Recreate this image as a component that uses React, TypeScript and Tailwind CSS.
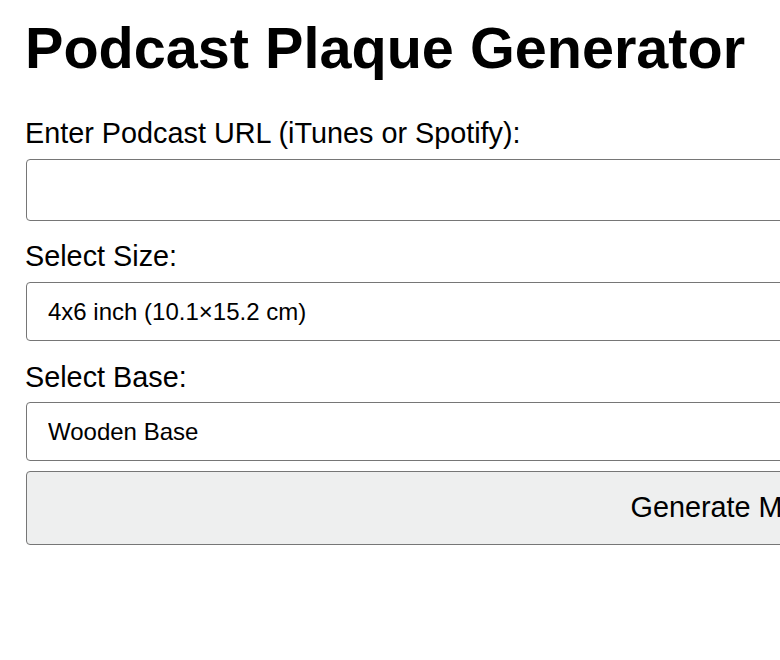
import { useState } from "react";

const sizes = ["4x6 inch (10.1×15.2 cm)", "5x7 inch (12.7×17.8 cm)", "8x10 inch (20.3×25.4 cm)"];
const bases = ["Wooden Base", "Acrylic Base", "No Base"];

export default function App() {
    const [url, setUrl] = useState("");
    const [size, setSize] = useState(sizes[0]);
    const [base, setBase] = useState(bases[0]);

    return (
        <div className="w-full h-screen overflow-hidden bg-white text-black font-['Liberation_Sans',Arial,sans-serif]">
            <div className="w-[1490px] pl-[25px]">
                <h1 className="mt-[15px] text-[57.6px] leading-[66px] font-bold">Podcast Plaque Generator</h1>

                <label htmlFor="url" className="block mt-[36px] text-[28.8px] leading-[32px]">
                    Enter Podcast URL (iTunes or Spotify):
                </label>
                <input
                    id="url"
                    type="text"
                    value={url}
                    onChange={(e) => setUrl(e.target.value)}
                    className="block ml-px mt-[10px] w-[1438px] h-[62px] px-[20px] text-[24px] bg-white border border-[#767676] rounded-[4px] outline-none"
                />

                <label htmlFor="size" className="block mt-[19px] text-[28.8px] leading-[32px]">
                    Select Size:
                </label>
                <select
                    id="size"
                    value={size}
                    onChange={(e) => setSize(e.target.value)}
                    className="block ml-px mt-[10px] w-[1438px] h-[59px] pl-[21px] text-[24px] bg-white border border-[#767676] rounded-[4px] appearance-none outline-none"
                >
                    {sizes.map((s) => (
                        <option key={s}>{s}</option>
                    ))}
                </select>

                <label htmlFor="base" className="block mt-[20px] text-[28.8px] leading-[32px]">
                    Select Base:
                </label>
                <select
                    id="base"
                    value={base}
                    onChange={(e) => setBase(e.target.value)}
                    className="block ml-px mt-[9px] w-[1438px] h-[59px] pl-[21px] text-[24px] bg-white border border-[#767676] rounded-[4px] appearance-none outline-none"
                >
                    {bases.map((b) => (
                        <option key={b}>{b}</option>
                    ))}
                </select>

                <button className="block ml-px mt-[10px] w-[1438px] h-[74px] text-[28.8px] bg-[#eeefef] border border-[#767676] rounded-[4px]">
                    Generate Mockup
                </button>
            </div>
        </div>
    );
}
